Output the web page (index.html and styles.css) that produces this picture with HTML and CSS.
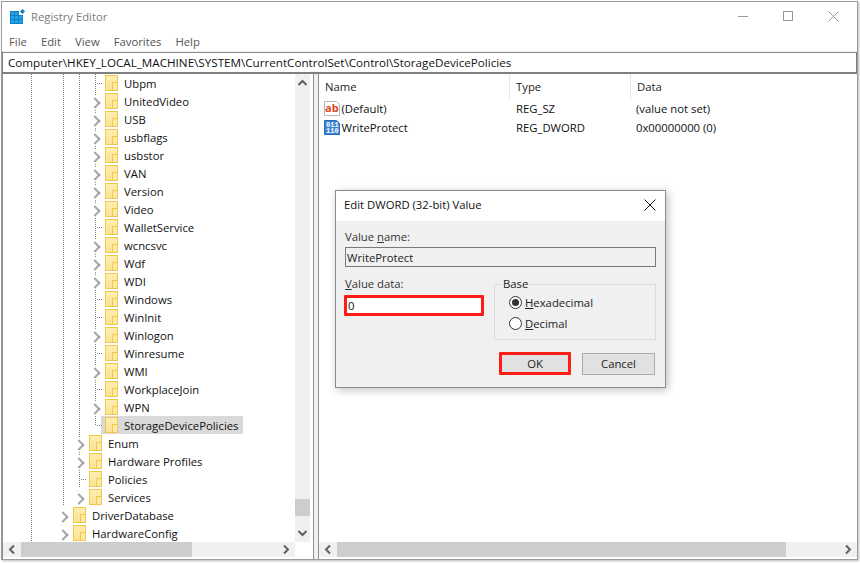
FILE: index.html
```html
<!DOCTYPE html>
<html lang="en">
<head>
<meta charset="utf-8">
<title>Registry Editor</title>
<link rel="stylesheet" href="styles.css">
</head>
<body>
<div class="window">
  <header class="titlebar">
    <svg class="appicon" width="16" height="16" viewBox="0 0 16 16">
      <path fill="#0f7fc6" d="M0 3h9v4h4v9H0z"/>
      <path fill="#21a3ea" d="M1 4h3v3H1zM5 4h3v3H5zM1 8h3v3H1zM5 8h3v3H5zM9 8h3v3H9zM1 12h3v3H1zM5 12h3v3H5zM9 12h3v3H9z"/>
      <path fill="#0f7fc6" d="M12.500 1l2.500 2.500-2.500 2.500L10 3.500z"/>
    </svg>
    <span class="apptitle">Registry Editor</span>
    <div class="winbtns">
      <svg width="11" height="11" viewBox="0 0 11 11"><path d="M0 5.500h10" stroke="#999" fill="none"/></svg>
      <svg width="11" height="11" viewBox="0 0 11 11"><rect x=".5" y=".5" width="9" height="9" stroke="#999" fill="none"/></svg>
      <svg width="11" height="11" viewBox="0 0 11 11"><path d="M.5.5l10 10M10.500.5l-10 10" stroke="#999" fill="none"/></svg>
    </div>
  </header>
  <nav class="menubar"><span>File</span><span>Edit</span><span>View</span><span>Favorites</span><span>Help</span></nav>
  <div class="address">Computer\HKEY_LOCAL_MACHINE\SYSTEM\CurrentControlSet\Control\StorageDevicePolicies</div>
  <main class="panes">
    <section class="treepane">
      <div class="tree">
        <div class="row"><i class="g l"></i><i class="g"></i><i class="g l"></i><i class="g l"></i><i class="g t"></i><i class="fd"></i><span>Ubpm</span></div>
        <div class="row"><i class="g l"></i><i class="g"></i><i class="g l"></i><i class="g l"></i><i class="g c"></i><i class="fd"></i><span>UnitedVideo</span></div>
        <div class="row"><i class="g l"></i><i class="g"></i><i class="g l"></i><i class="g l"></i><i class="g c"></i><i class="fd"></i><span>USB</span></div>
        <div class="row"><i class="g l"></i><i class="g"></i><i class="g l"></i><i class="g l"></i><i class="g c"></i><i class="fd"></i><span>usbflags</span></div>
        <div class="row"><i class="g l"></i><i class="g"></i><i class="g l"></i><i class="g l"></i><i class="g c"></i><i class="fd"></i><span>usbstor</span></div>
        <div class="row"><i class="g l"></i><i class="g"></i><i class="g l"></i><i class="g l"></i><i class="g c"></i><i class="fd"></i><span>VAN</span></div>
        <div class="row"><i class="g l"></i><i class="g"></i><i class="g l"></i><i class="g l"></i><i class="g c"></i><i class="fd"></i><span>Version</span></div>
        <div class="row"><i class="g l"></i><i class="g"></i><i class="g l"></i><i class="g l"></i><i class="g c"></i><i class="fd"></i><span>Video</span></div>
        <div class="row"><i class="g l"></i><i class="g"></i><i class="g l"></i><i class="g l"></i><i class="g t"></i><i class="fd"></i><span>WalletService</span></div>
        <div class="row"><i class="g l"></i><i class="g"></i><i class="g l"></i><i class="g l"></i><i class="g c"></i><i class="fd"></i><span>wcncsvc</span></div>
        <div class="row"><i class="g l"></i><i class="g"></i><i class="g l"></i><i class="g l"></i><i class="g c"></i><i class="fd"></i><span>Wdf</span></div>
        <div class="row"><i class="g l"></i><i class="g"></i><i class="g l"></i><i class="g l"></i><i class="g c"></i><i class="fd"></i><span>WDI</span></div>
        <div class="row"><i class="g l"></i><i class="g"></i><i class="g l"></i><i class="g l"></i><i class="g t"></i><i class="fd"></i><span>Windows</span></div>
        <div class="row"><i class="g l"></i><i class="g"></i><i class="g l"></i><i class="g l"></i><i class="g t"></i><i class="fd"></i><span>WinInit</span></div>
        <div class="row"><i class="g l"></i><i class="g"></i><i class="g l"></i><i class="g l"></i><i class="g c"></i><i class="fd"></i><span>Winlogon</span></div>
        <div class="row"><i class="g l"></i><i class="g"></i><i class="g l"></i><i class="g l"></i><i class="g t"></i><i class="fd"></i><span>Winresume</span></div>
        <div class="row"><i class="g l"></i><i class="g"></i><i class="g l"></i><i class="g l"></i><i class="g c"></i><i class="fd"></i><span>WMI</span></div>
        <div class="row"><i class="g l"></i><i class="g"></i><i class="g l"></i><i class="g l"></i><i class="g t"></i><i class="fd"></i><span>WorkplaceJoin</span></div>
        <div class="row"><i class="g l"></i><i class="g"></i><i class="g l"></i><i class="g l"></i><i class="g c"></i><i class="fd"></i><span>WPN</span></div>
        <div class="row"><i class="g l"></i><i class="g"></i><i class="g l"></i><i class="g l"></i><i class="g e"></i><div class="sel"><i class="fd"></i><span>StorageDevicePolicies</span></div></div>
        <div class="row"><i class="g l"></i><i class="g"></i><i class="g l"></i><i class="g c"></i><i class="fd"></i><span>Enum</span></div>
        <div class="row"><i class="g l"></i><i class="g"></i><i class="g l"></i><i class="g c"></i><i class="fd"></i><span>Hardware Profiles</span></div>
        <div class="row"><i class="g l"></i><i class="g"></i><i class="g l"></i><i class="g t"></i><i class="fd"></i><span>Policies</span></div>
        <div class="row"><i class="g l"></i><i class="g"></i><i class="g l"></i><i class="g c last"></i><i class="fd"></i><span>Services</span></div>
        <div class="row"><i class="g l"></i><i class="g"></i><i class="g c last"></i><i class="fd"></i><span>DriverDatabase</span></div>
        <div class="row"><i class="g l"></i><i class="g"></i><i class="g c last"></i><i class="fd"></i><span>HardwareConfig</span></div>
      </div>
      <div class="vscroll">
        <svg class="arrow" width="15" height="18" viewBox="0 0 15 18"><path d="M3.500 11l4-4 4 4" stroke="#606060" stroke-width="2" fill="none"/></svg>
        <div class="vtrack"><div class="vthumb"></div></div>
        <svg class="arrow" width="15" height="18" viewBox="0 0 15 18"><path d="M3.500 7l4 4 4-4" stroke="#606060" stroke-width="2" fill="none"/></svg>
      </div>
      <div class="hscroll">
        <svg class="arrow" width="18" height="15" viewBox="0 0 18 15"><path d="M11 3.500l-4 4 4 4" stroke="#606060" stroke-width="2" fill="none"/></svg>
        <div class="htrack"><div class="hthumb treethumb"></div></div>
        <svg class="arrow" width="18" height="15" viewBox="0 0 18 15"><path d="M7 3.500l4 4-4 4" stroke="#606060" stroke-width="2" fill="none"/></svg>
      </div>
    </section>
    <div class="splitter"></div>
    <section class="listpane">
      <div class="listhead"><span class="c1">Name</span><span class="c2">Type</span><span class="c3">Data</span></div>
      <div class="listrow">
        <svg class="vicon" width="17" height="17" viewBox="0 0 17 17"><path d="M.5 1.500h12l3 3v11H.5z" fill="#fff" stroke="#b9b9b9"/><text x="1" y="11.500" class="abtxt">ab</text></svg>
        <span class="c1 named">(Default)</span><span class="c2">REG_SZ</span><span class="c3">(value not set)</span>
      </div>
      <div class="listrow">
        <svg class="vicon" width="17" height="17" viewBox="0 0 17 17"><path d="M.5 1.500h12l3 3v11H.5z" fill="#3a86d6" stroke="#2a6cb5"/><text x="2" y="7.500" class="bintxt">011</text><text x="2" y="14" class="bintxt">110</text></svg>
        <span class="c1 named">WriteProtect</span><span class="c2">REG_DWORD</span><span class="c3">0x00000000 (0)</span>
      </div>
      <div class="listfill"></div>
      <div class="hscroll">
        <svg class="arrow" width="18" height="15" viewBox="0 0 18 15"><path d="M11 3.500l-4 4 4 4" stroke="#606060" stroke-width="2" fill="none"/></svg>
        <div class="htrack"><div class="hthumb listthumb"></div></div>
        <svg class="arrow" width="18" height="15" viewBox="0 0 18 15"><path d="M7 3.500l4 4-4 4" stroke="#606060" stroke-width="2" fill="none"/></svg>
      </div>
    </section>
  </main>
</div>

<div class="dialog">
  <div class="dlgtitle">
    <span>Edit DWORD (32-bit) Value</span>
    <svg width="12" height="12" viewBox="0 0 12 12"><path d="M.5.5l11 11M11.500.5l-11 11" stroke="#1a1a1a" fill="none"/></svg>
  </div>
  <div class="dlgbody">
    <div class="lbl">Value <u>n</u>ame:</div>
    <div class="namefield">WriteProtect</div>
    <div class="dlgmid">
      <div class="datacol">
        <div class="lbl"><u>V</u>alue data:</div>
        <div class="datafield">0</div>
      </div>
      <fieldset class="basegroup">
        <legend>Base</legend>
        <div class="radio"><i class="rd on"></i><span><u>H</u>exadecimal</span></div>
        <div class="radio"><i class="rd"></i><span><u>D</u>ecimal</span></div>
      </fieldset>
    </div>
    <div class="dlgbtns">
      <div class="btn ok">OK</div>
      <div class="btn cancel">Cancel</div>
    </div>
  </div>
</div>
</body>
</html>
```
FILE: styles.css
```css
* { box-sizing: border-box; }
html, body { margin: 0; height: 100%; background: #fff; overflow: hidden; }
body {
  position: relative;
  width: 860px;
  height: 563px;
  font-family: "Open Sans", "Noto Sans", sans-serif;
  font-size: 11.3px;
  color: #111;
}
i { display: block; font-style: normal; }

.window {
  margin: 1px 0 0 1px;
  width: 857px;
  height: 559px;
  border: 1px solid #9b9b9b;
  box-shadow: 1px 1px 2px #bbb;
  display: flex;
  flex-direction: column;
  background: #fff;
}
.titlebar { height: 28px; display: flex; align-items: center; padding-left: 8px; flex: none; }
.appicon { flex: none; }
.apptitle { margin-left: 5px; color: #7c7c7c; }
.winbtns { margin-left: auto; display: flex; gap: 34px; padding-right: 18px; }
.menubar { height: 22px; display: flex; align-items: center; padding-left: 7px; gap: 14px; flex: none; color: #555; }
.address {
  height: 22px;
  flex: none;
  border: 2px solid #7f7f7f;
  border-width: 1px 1px 2px 1px;
  border-top-color: #8a8a8a;
  padding-left: 5px;
  line-height: 19px;
  font-size: 11.65px;
  color: #111;
  white-space: nowrap;
  box-shadow: 0 -1px 0 #f0f0f0;
}
.panes { flex: 1; display: flex; min-height: 0; }

.treepane {
  width: 312px;
  flex: none;
  border-left: 1px solid #8f8f8f;
  border-right: 1px solid #8f8f8f;
  display: grid;
  grid-template-columns: 292px 17px;
  grid-template-rows: 1fr 17px;
  min-height: 0;
}
.tree { overflow: hidden; }
.row { height: 18px; display: flex; align-items: center; padding-left: 20px; white-space: nowrap; }
.row span { margin-left: 6px; }
.g { width: 16px; height: 18px; flex: none; position: relative; }
.l, .t, .c:not(.last) {
  background: linear-gradient(#808080 50%, transparent 50%) 8px 0 / 1px 2px repeat-y;
}
.t::after, .e::after {
  content: "";
  display: block;
  position: absolute;
  left: 9px;
  top: 9px;
  width: 6px;
  height: 1px;
  background: linear-gradient(90deg, transparent 50%, #808080 50%) 0 0 / 2px 1px repeat-x;
}
.e::before { content: ""; display: block; position: absolute; left: 8px; top: 0; width: 1px; height: 10px; background: linear-gradient(#808080 50%, transparent 50%) 0 0 / 1px 2px repeat-y; }
.c::before { content: ""; display: block; position: absolute; left: 2px; top: 3px; width: 12px; height: 14px; background: #fff; }
.c::after {
  content: "";
  display: block;
  position: absolute;
  left: 4px;
  top: 7px;
  width: 6px;
  height: 6px;
  border-top: 2px solid #a6a6a6;
  border-right: 2px solid #a6a6a6;
  transform: rotate(45deg);
}
.fd {
  width: 13px;
  height: 16px;
  flex: none;
  margin-left: 2px;
  position: relative;
  border: 1px solid #efc94f;
  background: linear-gradient(#feeeb2, #fde292);
}
.fd::after { content: ""; display: block; position: absolute; right: -1px; bottom: -1px; width: 4px; height: 7px; border: 1px solid #efc94f; background: #fde9a6; }
.sel { display: flex; align-items: center; height: 18px; width: 142px; margin-left: -2px; background: #d9d9d9; }
.sel .fd { margin-left: 4px; }

.vscroll { background: #f0f0f0; display: flex; flex-direction: column; margin-right: 2px; }
.arrow { flex: none; display: block; }
.vtrack { flex: 1; display: flex; flex-direction: column; justify-content: flex-end; padding-bottom: 8px; }
.vthumb { height: 17px; background: #cdcdcd; }
.hscroll { height: 15px; margin-bottom: 2px; flex: none; background: #f0f0f0; display: flex; align-items: center; }
.htrack { flex: 1; height: 15px; }
.hthumb { height: 100%; background: #cdcdcd; }
.treethumb { width: 171px; }
.listthumb { width: 449px; }

.splitter { width: 4px; flex: none; background: #f0f0f0; }
.listpane { flex: 1; display: flex; flex-direction: column; min-width: 0; border-left: 1px solid #8f8f8f; }
.listhead { height: 25px; flex: none; display: flex; align-items: center; color: #222; }
.listhead span { height: 25px; line-height: 25px; }
.listhead .c1 { width: 191px; padding-left: 6px; border-right: 1px solid #e5e5e5; }
.listhead .c2 { width: 121px; padding-left: 6px; border-right: 1px solid #e5e5e5; }
.listhead .c3 { padding-left: 6px; }
.listrow { height: 19px; flex: none; display: flex; align-items: center; padding-left: 5px; }
.vicon { flex: none; }
.named { width: 174.500px; margin-left: .5px; }
.listrow .c2 { width: 120px; }
.abtxt { font: bold 11px "Open Sans", sans-serif; fill: #dc4a24; }
.bintxt { font: bold 7px "Liberation Mono", monospace; fill: #fff; }
.listfill { flex: 1; }

.dialog {
  position: absolute;
  left: 335px;
  top: 190px;
  width: 331px;
  height: 198px;
  border: 1px solid #8c8c8c;
  background: #f0f0f0;
  box-shadow: 2px 2px 8px rgba(0,0,0,.25);
  display: flex;
  flex-direction: column;
}
.dlgtitle { height: 30px; flex: none; background: #fff; display: flex; align-items: center; justify-content: space-between; padding: 0 9px 3px 8px; }
.dlgbody { flex: 1; padding: 8px 9px 0 9px; display: flex; flex-direction: column; }
.lbl { line-height: 16px; color: #333; }
.namefield { margin-top: 2px; width: 311px; height: 20px; border: 1px solid #7a7a7a; background: #f0f0f0; padding-left: 1px; line-height: 19px; color: #222; }
.dlgmid { display: flex; margin-top: 9px; }
.datacol { width: 149px; flex: none; }
.datafield { margin-top: 3px; margin-left: -1px; width: 140px; height: 21px; border: 3px solid #ff1c14; border-radius: 1px; background: #fff; padding-left: 1px; line-height: 15px; }
.basegroup { margin: 0; padding: 0 0 0 14px; width: 162px; height: 64px; border: 1px solid #dcdcdc; }
.basegroup legend { padding: 0 2px; margin-left: -8px; line-height: 16px; color: #222; }
.radio { height: 21px; display: flex; align-items: center; gap: 3px; color: #222; }
.rd { width: 13px; height: 13px; border: 1px solid #333; border-radius: 50%; background: #fff; flex: none; position: relative; }
.rd.on::after { content: ""; display: block; position: absolute; left: 2px; top: 2px; width: 7px; height: 7px; border-radius: 50%; background: #333; }
.dlgbtns { display: flex; margin-top: 12px; margin-left: 154px; gap: 11px; align-items: flex-start; }
.btn { text-align: center; color: #222; background: #e1e1e1; }
.ok { width: 72px; height: 23px; line-height: 17px; border: 3px solid #ff1c14; border-radius: 1px; }
.cancel { width: 73px; height: 22px; margin-top: 1px; line-height: 20px; border: 1px solid #adadad; }
```
